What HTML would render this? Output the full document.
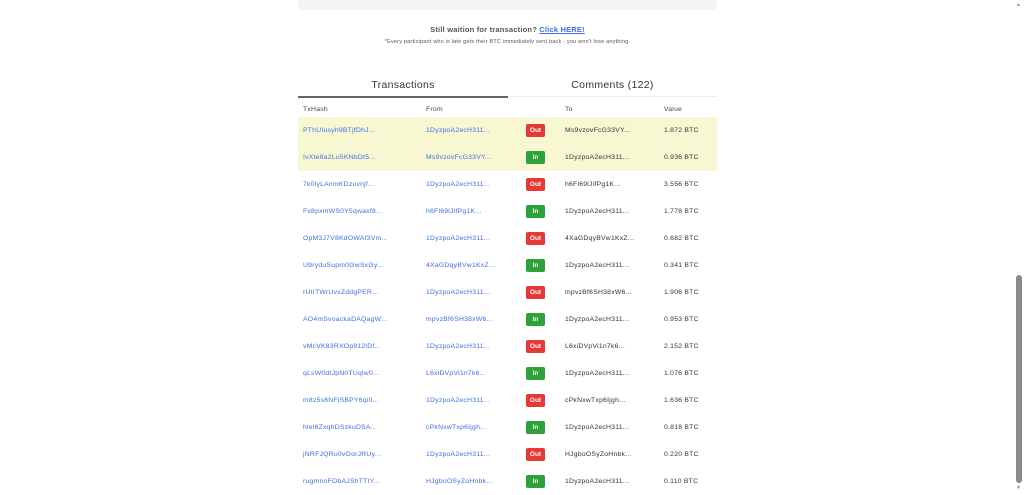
<!DOCTYPE html>
<html><head><style>
body{margin:0;width:1024px;height:495px;background:#fff;font-family:"Liberation Sans",sans-serif;position:relative;overflow:hidden}
.top{position:absolute;left:298px;top:-5px;width:419px;height:15px;background:#f4f4f4;border-radius:0 0 5px 5px}
.c{position:absolute;left:298px;width:419px;text-align:center}
.l1{top:25px;font-size:7.5px;color:#555;font-weight:bold;letter-spacing:0.2px}
.l1 a{color:#3b6ee8;text-decoration:underline}
.l2{top:39px;font-size:5.5px;color:#555;letter-spacing:0.2px}
.tab{position:absolute;top:79px;font-size:10.5px;color:#333;text-align:center;letter-spacing:0.3px}
.ul{position:absolute;left:298px;top:96px;width:210px;height:2px;background:#666}
.ul2{position:absolute;left:508px;top:96px;width:209px;height:1px;background:#eee}
.row{position:absolute;left:298px;width:419px;height:27px;font-size:6.8px;color:#333;letter-spacing:0.25px}
.row span{position:absolute;top:10px}
.h span{color:#444}
.lk{color:#3b6ee8}
.badge{position:absolute;left:228px;top:7px;width:19px;height:13px;border-radius:2px;color:#fff;font-size:6.5px;font-weight:bold;text-align:center;line-height:13px;letter-spacing:0}
.out{background:#e53935}.in{background:#2ea23a}
.sb{position:absolute;left:1016px;top:275px;width:6px;height:208px;background:#8a8a8a;border-radius:3px}
</style></head><body>
<div class="top"></div>
<div class="c l1">Still waition for transaction? <a>Click HERE!</a></div>
<div class="c l2">*Every participant who is late gets their BTC immediately sent back - you won't lose anything.</div>
<div class="tab" style="left:298px;width:210px">Transactions</div>
<div class="tab" style="left:508px;width:209px">Comments (122)</div>
<div class="ul2"></div><div class="ul"></div>
<div class="row h" style="top:96px"><span style="left:5px">TxHash</span><span style="left:128px">From</span><span style="left:267px">To</span><span style="left:366px">Value</span></div>
<div id="rows"></div>
<div style="position:absolute;left:1016px;top:2px;font-size:5px;color:#888">▲</div>
<div style="position:absolute;left:1016px;top:485px;font-size:5px;color:#888">▼</div>
<div class="sb"></div>
<script>
var d=[["PThUIusyh9BTjfDhJ...","1DyzpoA2ecH311...",0,"Ms9vzovFcG33VY...","1.872 BTC"],
["IvXte8a2Lu5KNbDt5...","Ms9vzovFcG33VY...",1,"1DyzpoA2ecH311...","0.936 BTC"],
["7k0lyLAnmKDzuvnjf...","1DyzpoA2ecH311...",0,"h6Fl69lJifPg1K...","3.556 BTC"],
["Fv8pxmWS0Y5qwaxf8...","h6Fl69lJifPg1K...",1,"1DyzpoA2ecH311...","1.778 BTC"],
["OpM3J7V8KdOWAf3Vm...","1DyzpoA2ecH311...",0,"4XaGDqyBVw1KxZ...","0.682 BTC"],
["U9ryduSupm0GwSxGy...","4XaGDqyBVw1KxZ...",1,"1DyzpoA2ecH311...","0.341 BTC"],
["rUtITWrUvxZddgPER...","1DyzpoA2ecH311...",0,"mpvzBf6SH38xW6...","1.906 BTC"],
["AO4mSvoackaDAQagW...","mpvzBf6SH38xW6...",1,"1DyzpoA2ecH311...","0.953 BTC"],
["vMcVK83RXOp912lDf...","1DyzpoA2ecH311...",0,"L6xiDVpVi1n7k6...","2.152 BTC"],
["qLsW0dtJpN0TUqlw0...","L6xiDVpVi1n7k6...",1,"1DyzpoA2ecH311...","1.076 BTC"],
["m8z5s6NFiSBPY6qi0...","1DyzpoA2ecH311...",0,"cPkNxwTxp6Ijgh...","1.636 BTC"],
["hlel6ZxqhDSzkuDSA...","cPkNxwTxp6Ijgh...",1,"1DyzpoA2ecH311...","0.818 BTC"],
["jNRFJQRu0vOorJRUy...","1DyzpoA2ecH311...",0,"HJgboOSyZoHnbk...","0.220 BTC"],
["rugmnoFObAJShTTtY...","HJgboOSyZoHnbk...",1,"1DyzpoA2ecH311...","0.110 BTC"]];
var h="";d.forEach(function(r,i){h+='<div class="row" style="top:'+(117+27*i)+'px;'+(i<2?'background:#f7f7d2':'')+'"><span class="lk" style="left:5px">'+r[0]+'</span><span class="lk" style="left:128px">'+r[1]+'</span><div class="badge '+(r[2]?'in':'out')+'">'+(r[2]?'In':'Out')+'</div><span style="left:267px">'+r[3]+'</span><span style="left:366px">'+r[4]+'</span></div>'});
document.getElementById("rows").innerHTML=h;
</script>
</body></html>
